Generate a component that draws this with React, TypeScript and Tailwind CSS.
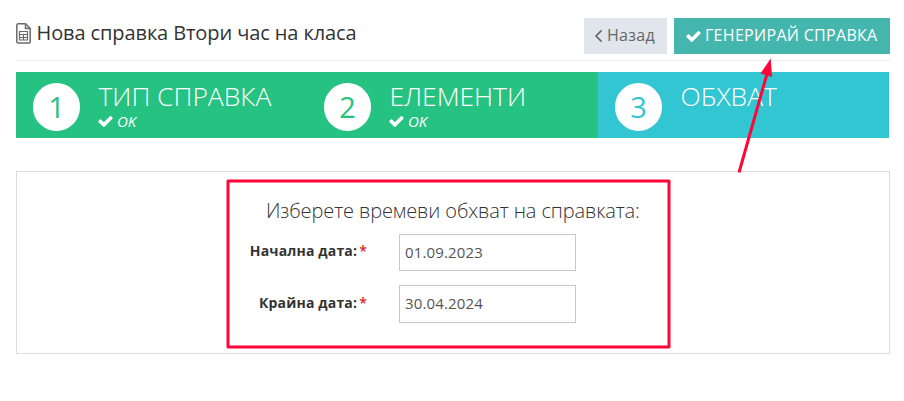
import { clsx } from 'clsx'

type Step = { id: number; title: string; done: boolean }

const steps: Step[] = [
  { id: 1, title: 'ТИП СПРАВКА', done: true },
  { id: 2, title: 'ЕЛЕМЕНТИ', done: true },
  { id: 3, title: 'ОБХВАТ', done: false },
]

const fields = [
  { name: 'start', label: 'Начална дата:', value: '01.09.2023', labelPad: 'pt-[7px]', height: 'h-[37px]' },
  { name: 'end', label: 'Крайна дата:', value: '30.04.2024', labelPad: 'pt-2', height: 'h-[38px]' },
]

const CheckIcon = ({ className }: { className?: string }) => (
  <svg viewBox="121 334 1550 1188" className={className} fill="currentColor">
    <path d="M1671 566q0 40-28 68l-724 724-136 136q-28 28-68 28t-68-28l-136-136-362-362q-28-28-28-68t28-68l136-136q28-28 68-28t68 28l294 295 656-657q28-28 68-28t68 28l136 136q28 28 28 68z" />
  </svg>
)

const AngleLeftIcon = ({ className }: { className?: string }) => (
  <svg viewBox="621 461 582 998" className={className} fill="currentColor">
    <path d="M1203 544q0 13-10 23l-393 393 393 393q10 10 10 23t-10 23l-50 50q-10 10-23 10t-23-10l-466-466q-10-10-10-23t10-23l466-466q10-10 23-10t23 10l50 50q10 10 10 23z" />
  </svg>
)

const ReportIcon = ({ className }: { className?: string }) => (
  <svg viewBox="0 0 15 21" className={className} fill="none" stroke="#6b6b6b" strokeWidth="1.5">
    <path d="M2 0.8h7.6l4.6 4.8v13.1a1.4 1.4 0 0 1-1.4 1.4H2.2a1.4 1.4 0 0 1-1.4-1.4V2.2A1.4 1.4 0 0 1 2 .8z" />
    <path d="M9.5 1v4.5h4.500" />
    <path d="M3.5 8.500h8v8.500h-8zM3.500 11.500h8M3.500 14.500h8M7.500 11.500v5.500" strokeWidth="1.2" />
  </svg>
)

const Header = () => (
  <header className="flex h-[43px] items-start border-b border-[#eeeeee]">
    <ReportIcon className="mt-[5px] h-[21px] w-[15px]" />
    <h1 className="ml-[5.5px] flex-1 whitespace-nowrap text-xl leading-[30px] tracking-[-0.1px] text-[#333333]">
      Нова справка Втори час на класа
    </h1>
    <button className="flex h-9 w-[83px] items-center bg-[#e1e5ec] pb-[2px] pl-[11px] text-base tracking-[0.3px] text-[#666666]">
      <AngleLeftIcon className="mr-[5px] mt-[2px] h-3 w-[7px]" />
      Назад
    </button>
    <button className="ml-[7px] flex h-9 w-[216px] items-center whitespace-nowrap bg-[#44b6ae] pb-[2px] pl-3 text-base tracking-[0.3px] text-white">
      <CheckIcon className="mr-1 mt-[2px] h-[11px] w-[15px] shrink-0" />
      ГЕНЕРИРАЙ СПРАВКА
    </button>
  </header>
)

const StepItem = ({ step }: { step: Step }) => (
  <div className={clsx('flex flex-1 pl-[17px] pt-[11px] text-white', step.done ? 'bg-[#26c281]' : 'bg-[#32c5d2]')}>
    <div
      className={clsx(
        'flex h-12 w-[47px] items-center justify-center rounded-full bg-white pb-[2px] text-[29px] leading-none',
        step.done ? 'text-[#26c281]' : 'text-[#32c5d2]',
      )}
    >
      {step.id}
    </div>
    <div className="ml-[18px]">
      <div className="h-[30px] whitespace-nowrap pl-[0.5px] text-[26.5px] font-light leading-[27px] tracking-[-0.05px]">
        {step.title}
      </div>
      {step.done && (
        <div className="flex items-center text-[15px] italic leading-4">
          <CheckIcon className="mr-[4px] h-[11px] w-[15px]" />
          OK
        </div>
      )}
    </div>
  </div>
)

const DateForm = () => (
  <form className="ml-[213px] pt-[26px]">
    <h2 className="whitespace-nowrap pl-[36px] text-xl font-light leading-[26px] tracking-[-0.11px] text-[#333333]">
      Изберете времеви обхват на справката:
    </h2>
    <div className="mt-[10px] flex flex-col gap-[14px]">
      {fields.map((field) => (
        <div key={field.name} className="flex">
          <label
            htmlFor={field.name}
            className={clsx(
              'w-[137px] whitespace-nowrap text-right text-sm font-bold leading-5 tracking-[0.17px] text-[#333333]',
              field.labelPad,
            )}
          >
            {field.label}
            <span className="pl-[2px] font-semibold text-[#e02222]">*</span>
          </label>
          <input
            id={field.name}
            defaultValue={field.value}
            className={clsx(
              'ml-[32px] w-[177px] border border-[#c2cad8] bg-white px-[5px] pb-[2px] text-[15px] tracking-[0.15px] text-[#555555]',
              field.height,
            )}
          />
        </div>
      ))}
    </div>
  </form>
)

// Red frame round the form and the arrow towards the generate button
const Annotations = () => (
  <svg className="pointer-events-none absolute inset-0" width="904" height="401" fill="none">
    <rect x="228" y="181" width="441" height="166" stroke="#ff0538" strokeWidth="3" strokeLinejoin="round" />
    <path d="M739 172.500L767 74" stroke="#ff0538" strokeWidth="3" />
    <path d="M770.700 58.500L772 77L760.500 73.500z" fill="#ff0538" />
  </svg>
)

export default function App() {
  return (
    <div className="relative h-[401px] w-[904px] overflow-hidden bg-white pl-4 pr-[14px] pt-[18px] font-['Open_Sans',sans-serif]">
      <Header />
      <div className="mr-px mt-[11px] flex h-[66px]">
        {steps.map((step) => (
          <StepItem key={step.id} step={step} />
        ))}
      </div>
      <main className="mt-[33px] h-[183px] border border-[#dddddd]">
        <DateForm />
      </main>
      <Annotations />
    </div>
  )
}
